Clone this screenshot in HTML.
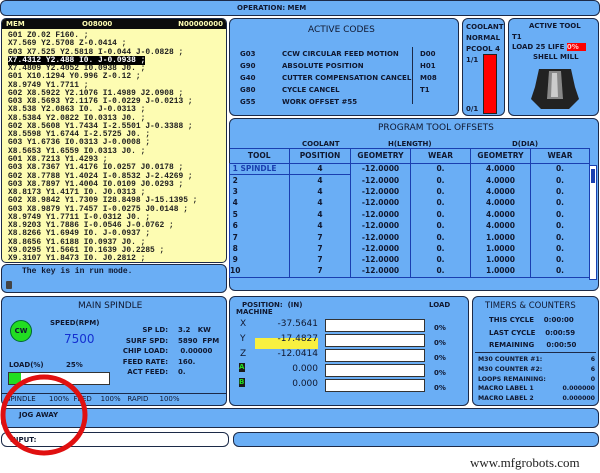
<!DOCTYPE html>
<html><head><style>
*{margin:0;padding:0;box-sizing:border-box}
body{width:600px;height:473px;background:#fff;position:relative;overflow:hidden;font-family:"DejaVu Sans",sans-serif;font-weight:bold;color:#101830}
.p{position:absolute;background:#6aaef5;border:1.5px solid #1c2a48;border-radius:6px}
.a{position:absolute;white-space:pre}
.s{font-size:7px}
.prog{position:absolute;left:1px;top:18px;width:226px;height:245px;background:#fdfcb2;border:1.5px solid #1c2a48;border-radius:5px;overflow:hidden}
.prog .hd{background:#0c0c0c;color:#fdfcb2;height:10px;font-size:7px;line-height:10px;position:relative}
.prog .code{font-family:"Liberation Mono",monospace;font-size:7.9px;line-height:8.27px;padding:3px 0 0 6px;color:#202020;white-space:pre}
.hl{background:#000;color:#fff}
table{border-collapse:collapse}
.tt{position:absolute;left:229px;top:148px;font-size:7.5px}
.tt td{height:11.4px;text-align:center;border-left:1px solid #1a3fb0;border-right:1px solid #1a3fb0;line-height:10px;padding:0}
.tt tr.h td{height:15px;border-bottom:1px solid #1a3fb0;border-top:1px solid #1a3fb0}
.bar{position:absolute;background:#fff;border:1px solid #333;height:13px}
</style></head><body>
<div class="p" style="left:0;top:0;width:600px;height:16px;border-radius:6px"><span class="a s" style="left:236px;top:3px">OPERATION: MEM</span></div>

<div class="prog"><div class="hd"><span style="position:absolute;left:4px">MEM</span><span style="position:absolute;left:80px">O08000</span><span style="position:absolute;right:3px">N00000000</span></div>
<div class="code">G01 Z0.02 F160. ;
X7.569 Y2.5708 Z-0.0414 ;
G03 X7.525 Y2.5818 I-0.044 J-0.0828 ;
<span class="hl">X7.4312 Y2.488 I0. J-0.0938 ;</span>
X7.4809 Y2.4052 I0.0938 J0. ;
G01 X10.1294 Y0.996 Z-0.12 ;
X8.9749 Y1.7711 ;
G02 X8.5922 Y2.1076 I1.4989 J2.0908 ;
G03 X8.5693 Y2.1176 I-0.0229 J-0.0213 ;
X8.538 Y2.0863 I0. J-0.0313 ;
X8.5384 Y2.0822 I0.0313 J0. ;
G02 X8.5608 Y1.7434 I-2.5501 J-0.3388 ;
X8.5598 Y1.6744 I-2.5725 J0. ;
G03 Y1.6736 I0.0313 J-0.0008 ;
X8.5653 Y1.6559 I0.0313 J0. ;
G01 X8.7213 Y1.4293 ;
G03 X8.7367 Y1.4176 I0.0257 J0.0178 ;
G02 X8.7788 Y1.4024 I-0.8532 J-2.4269 ;
G03 X8.7897 Y1.4004 I0.0109 J0.0293 ;
X8.8173 Y1.4171 I0. J0.0313 ;
G02 X8.9842 Y1.7309 I28.8498 J-15.1395 ;
G03 X8.9879 Y1.7457 I-0.0275 J0.0148 ;
X8.9749 Y1.7711 I-0.0312 J0. ;
X8.9203 Y1.7886 I-0.0546 J-0.0762 ;
X8.8266 Y1.6949 I0. J-0.0937 ;
X8.8656 Y1.6188 I0.0937 J0. ;
X9.0295 Y1.5661 I0.1639 J0.2285 ;
X9.3107 Y1.8473 I0. J0.2812 ;</div></div>

<div class="p" style="left:1px;top:264px;width:226px;height:29px"><span class="a" style="left:20px;top:2px;font-size:8px;font-family:'Liberation Mono',monospace">The key is in run mode.</span><span class="a" style="left:4px;top:16px;width:6px;height:8px;background:#444;border-radius:1px"></span></div>

<div class="p" style="left:229px;top:18px;width:230px;height:98px">
<span class="a" style="left:78px;top:6px;font-size:9px;font-weight:normal">ACTIVE CODES</span>
<div class="a s" style="left:10px;top:29px;line-height:12px">G03
G90
G40
G80
G55</div>
<div class="a s" style="left:52px;top:29px;line-height:12px">CCW CIRCULAR FEED MOTION
ABSOLUTE POSITION
CUTTER COMPENSATION CANCEL
CYCLE CANCEL
WORK OFFSET #55</div>
<span class="a" style="left:182px;top:28px;width:1px;height:57px;background:#1c2a48"></span>
<div class="a s" style="left:190px;top:29px;line-height:12px">D00
H01
M08
T1</div></div>

<div class="p" style="left:462px;top:18px;width:43px;height:98px"><div class="a s" style="left:3px;top:3px;line-height:11px">COOLANT
NORMAL
PCOOL 4
1/1</div><span class="a" style="left:20px;top:35px;width:14px;height:60px;background:#f00;border:1px solid #222"></span><span class="a s" style="left:3px;top:86px">0/1</span></div>

<div class="p" style="left:508px;top:18px;width:91px;height:98px"><span class="a s" style="left:20px;top:3px">ACTIVE TOOL</span><span class="a s" style="left:3px;top:14px">T1</span><span class="a s" style="left:3px;top:24px">LOAD 25 LIFE <span style="background:#f00;color:#fcc">0%   </span></span><span class="a s" style="left:24px;top:34px">SHELL MILL</span>
<svg class="a" style="left:20px;top:44px" width="52" height="48"><path d="M10 6 L42 6 L46 24 L50 36 L40 46 L12 46 L2 36 L6 24 Z" fill="#222"/><path d="M20 8 L32 8 L34 36 L18 36Z" fill="#888"/><path d="M23 10 L28 10 L29 34 L22 34Z" fill="#ccc"/></svg></div>

<div class="p" style="left:229px;top:118px;width:370px;height:173px">
<span class="a" style="left:148px;top:4px;font-size:9px;font-weight:normal">PROGRAM TOOL OFFSETS</span>
<span class="a s" style="left:72px;top:21px">COOLANT</span><span class="a s" style="left:158px;top:21px">H(LENGTH)</span><span class="a s" style="left:282px;top:21px">D(DIA)</span>
<span class="a" style="left:359px;top:46px;width:8px;height:115px;background:#fff;border:1px solid #1a3fb0"></span><span class="a" style="left:361px;top:50px;width:4px;height:14px;background:#1a3fb0"></span></div>
<table class="tt"><tr class="h"><td style="width:60px;border-left:0">TOOL</td><td style="width:61px">POSITION</td><td style="width:60px">GEOMETRY</td><td style="width:60px">WEAR</td><td style="width:60px">GEOMETRY</td><td style="width:59px">WEAR</td></tr>
<tr><td style="text-align:left;color:#1a3fb0;border:1.5px solid #1a3fb0">&nbsp;1 SPINDLE</td><td style="border:1.5px solid #1a3fb0">4</td><td>-12.0000</td><td>0.</td><td>4.0000</td><td>0.</td></tr>
<tr><td style="text-align:left">&nbsp;2</td><td>4</td><td>-12.0000</td><td>0.</td><td>4.0000</td><td>0.</td></tr>
<tr><td style="text-align:left">&nbsp;3</td><td>4</td><td>-12.0000</td><td>0.</td><td>4.0000</td><td>0.</td></tr>
<tr><td style="text-align:left">&nbsp;4</td><td>4</td><td>-12.0000</td><td>0.</td><td>4.0000</td><td>0.</td></tr>
<tr><td style="text-align:left">&nbsp;5</td><td>4</td><td>-12.0000</td><td>0.</td><td>4.0000</td><td>0.</td></tr>
<tr><td style="text-align:left">&nbsp;6</td><td>4</td><td>-12.0000</td><td>0.</td><td>4.0000</td><td>0.</td></tr>
<tr><td style="text-align:left">&nbsp;7</td><td>7</td><td>-12.0000</td><td>0.</td><td>1.0000</td><td>0.</td></tr>
<tr><td style="text-align:left">&nbsp;8</td><td>7</td><td>-12.0000</td><td>0.</td><td>1.0000</td><td>0.</td></tr>
<tr><td style="text-align:left">&nbsp;9</td><td>7</td><td>-12.0000</td><td>0.</td><td>1.0000</td><td>0.</td></tr>
<tr><td style="text-align:left;border-bottom:1px solid #1a3fb0">10</td><td style="border-bottom:1px solid #1a3fb0">7</td><td style="border-bottom:1px solid #1a3fb0">-12.0000</td><td style="border-bottom:1px solid #1a3fb0">0.</td><td style="border-bottom:1px solid #1a3fb0">1.0000</td><td style="border-bottom:1px solid #1a3fb0">0.</td></tr></table>

<div class="p" style="left:1px;top:296px;width:226px;height:110px">
<span class="a" style="left:76px;top:4px;font-size:9px;font-weight:normal">MAIN SPINDLE</span>
<span class="a" style="left:8px;top:23px;width:22px;height:22px;border-radius:50%;background:#22dd22;border:1px solid #063;font-size:7px;line-height:20px;text-align:center">CW</span>
<span class="a s" style="left:48px;top:22px">SPEED(RPM)</span>
<span class="a" style="left:62px;top:35px;font-size:12px;color:#1530d0;font-weight:normal">7500</span>
<span class="a s" style="left:7px;top:64px">LOAD(%)</span><span class="a s" style="left:64px;top:64px">25%</span>
<span class="bar" style="left:6px;top:75px;width:102px"></span><span class="a" style="left:7px;top:76px;width:12px;height:11px;background:#22dd22"></span>
<div class="a s" style="left:118px;top:28px;line-height:10.5px;text-align:right;width:48px">SP LD:
SURF SPD:
CHIP LOAD:
FEED RATE:
ACT FEED:</div>
<div class="a s" style="left:176px;top:28px;line-height:10.5px">3.2   KW
5890  FPM
 0.00000
160.
0.</div>
<span class="a" style="left:0;top:96px;width:224px;height:1px;background:#1c2a48"></span>
<span class="a s" style="left:4px;top:98px;font-weight:normal">SPINDLE      100%  FEED    100%   RAPID     100%</span></div>

<div class="p" style="left:229px;top:296px;width:240px;height:110px">
<span class="a s" style="left:12px;top:4px">POSITION:  (IN)</span><span class="a s" style="left:199px;top:4px">LOAD</span><span class="a s" style="left:6px;top:11px">MACHINE</span>
<div class="a" style="left:10px;top:20px;font-size:9px;line-height:15px;font-weight:normal">X
Y
Z</div>
<span class="a" style="left:9px;top:66px;width:6px;height:9px;background:#1a1a1a;color:#2d2;font-size:7px">A</span><span class="a" style="left:9px;top:81px;width:6px;height:9px;background:#1a1a1a;color:#2d2;font-size:7px">B</span>
<span class="a" style="left:25px;top:41px;width:63px;height:11px;background:#f8f040"></span>
<div class="a" style="left:20px;top:20px;width:68px;text-align:right;font-size:9px;line-height:15px;font-weight:normal">-37.5641
-17.4827
-12.0414
0.000
0.000</div>
<span class="bar" style="left:95px;top:22px;width:100px"></span><span class="bar" style="left:95px;top:37px;width:100px"></span><span class="bar" style="left:95px;top:52px;width:100px"></span><span class="bar" style="left:95px;top:67px;width:100px"></span><span class="bar" style="left:95px;top:82px;width:100px"></span>
<div class="a s" style="left:204px;top:24px;line-height:15px">0%
0%
0%
0%
0%</div></div>

<div class="p" style="left:472px;top:296px;width:127px;height:110px">
<span class="a" style="left:12px;top:4px;font-size:8.5px;font-weight:normal">TIMERS &amp; COUNTERS</span>
<div class="a s" style="left:16px;top:17px;line-height:12.5px">THIS CYCLE    0:00:00
LAST CYCLE    0:00:59
REMAINING     0:00:50</div>
<span class="a" style="left:2px;top:55px;width:121px;height:1px;background:#1c2a48"></span>
<div class="a" style="left:5px;top:58px;font-size:6.2px;line-height:9.8px">M30 COUNTER #1:
M30 COUNTER #2:
LOOPS REMAINING:
MACRO LABEL 1
MACRO LABEL 2</div>
<div class="a" style="right:3px;top:58px;font-size:6.2px;line-height:9.8px;text-align:right">6
6
0
0.000000
0.000000</div></div>

<div class="p" style="left:1px;top:408px;width:598px;height:20px"><span class="a s" style="left:17px;top:2px">JOG AWAY</span></div>
<div class="p" style="left:1px;top:432px;width:228px;height:15px;background:#fff"><span class="a s" style="left:8px;top:3px">INPUT:</span></div>
<div class="p" style="left:233px;top:432px;width:366px;height:15px"></div>
<span class="a" style="left:470px;top:455px;font-family:'Liberation Serif',serif;font-size:13px;font-weight:normal;color:#222">www.mfgrobots.com</span>
<svg style="position:absolute;left:0;top:0" width="600" height="473"><ellipse cx="44" cy="415" rx="41" ry="38" fill="none" stroke="#e01010" stroke-width="5"/></svg>
</body></html>
